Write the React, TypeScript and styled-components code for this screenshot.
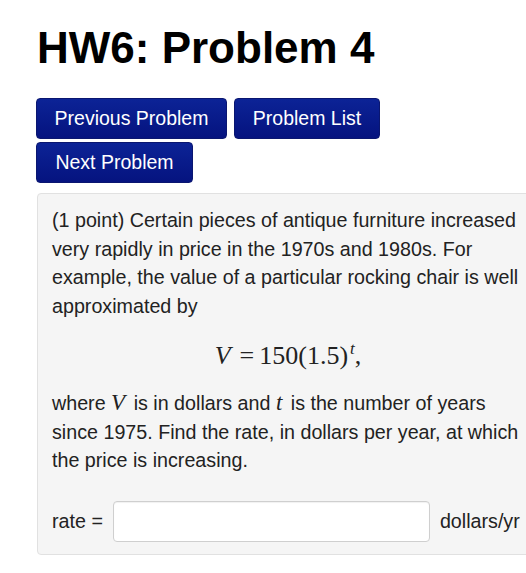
import React from 'react';
import styled, { createGlobalStyle } from 'styled-components';

const GlobalStyle = createGlobalStyle`
  html, body {
    margin: 0;
    padding: 0;
    background: #fff;
    overflow: hidden;
  }
  body {
    font-family: "Liberation Sans", Arial, sans-serif;
    color: #222;
  }
`;

const Page = styled.div`
  padding: 22px 0 0 36px;
  width: 520px;
`;

const Title = styled.h1`
  margin: 0 0 24px 1px;
  font-size: 44px;
  font-weight: bold;
  color: #000;
  line-height: 52px;
`;

const Nav = styled.div`
  display: flex;
  flex-wrap: wrap;
  width: 360px;
  column-gap: 7px;
  row-gap: 3px;
`;

const NavButton = styled.button<{ $w: number }>`
  width: ${(p) => p.$w}px;
  height: 41px;
  padding: 0;
  border: 1px solid #0a1670;
  border-radius: 4px;
  background: linear-gradient(to bottom, #0c2396 0%, #05137f 100%);
  color: #fff;
  font-family: "Liberation Sans", Arial, sans-serif;
  font-size: 19.5px;
  text-align: center;
  cursor: pointer;
`;

const ProblemBox = styled.div`
  margin-top: 10px;
  margin-left: 1px;
  width: 520px;
  box-sizing: border-box;
  padding: 12px 0 12px 14px;
  background: #f5f5f5;
  border: 1px solid #e1e1e1;
  border-radius: 4px;
`;

const Para = styled.p`
  margin: 0;
  width: 474px;
  font-size: 19.7px;
  line-height: 28.7px;
  color: #222;
`;

const Equation = styled.div`
  width: 472px;
  height: 30px;
  margin: 20px 0 18px;
  line-height: 30px;
  text-align: center;
  font-family: "Liberation Serif", "Times New Roman", serif;
  font-size: 26px;
  color: #222;
`;

const Op = styled.span`
  margin: 0 5px 0 9px;
`;

const Sup = styled.sup`
  font-size: 17px;
  line-height: 0;
  margin-left: 2px;
`;

const MathVar = styled.i`
  font-family: "Liberation Serif", "Times New Roman", serif;
  font-size: 23px;
  line-height: 0;
  margin-right: 3px;
`;

const AnswerRow = styled.div`
  display: flex;
  align-items: center;
  margin-top: 26px;
  font-size: 19.7px;
`;

const AnswerInput = styled.input`
  width: 317px;
  height: 41px;
  box-sizing: border-box;
  margin: 0 10px 0 10px;
  border: 1px solid #cfcfcf;
  border-radius: 4px;
  background: #fff;
  box-shadow: inset 0 1px 1px rgba(0, 0, 0, 0.06);
`;

export default function App() {
  return (
    <Page>
      <GlobalStyle />
      <Title>HW6: Problem 4</Title>
      <Nav>
        <NavButton $w={191}>Previous Problem</NavButton>
        <NavButton $w={146}>Problem List</NavButton>
        <NavButton $w={157}>Next Problem</NavButton>
      </Nav>
      <ProblemBox>
        <Para>
          (1 point) Certain pieces of antique furniture increased very rapidly in
          price in the 1970s and 1980s. For example, the value of a particular
          rocking chair is well approximated by
        </Para>
        <Equation>
          <i>V</i>
          <Op>=</Op>150(1.5)
          <Sup>
            <i>t</i>
          </Sup>
          ,
        </Equation>
        <Para>
          where <MathVar>V</MathVar> is in dollars and <MathVar>t</MathVar> is the
          number of years since 1975. Find the rate, in dollars per year, at which
          the price is increasing.
        </Para>
        <AnswerRow>
          <span>rate =</span>
          <AnswerInput type="text" />
          <span>dollars/yr</span>
        </AnswerRow>
      </ProblemBox>
    </Page>
  );
}
